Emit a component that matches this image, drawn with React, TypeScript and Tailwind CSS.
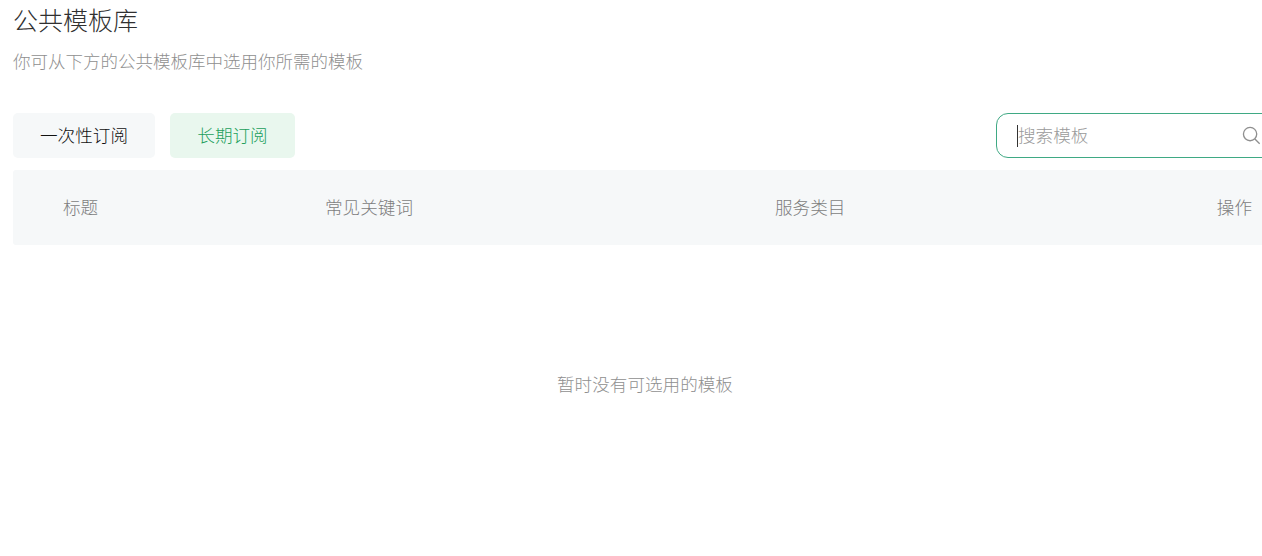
export default function App() {
  return (
    <div className="w-[1262px] h-[556px] overflow-hidden bg-white pl-[13px] font-['Noto_Sans_CJK_SC',sans-serif] font-light">
      <div className="w-[1264px]">
        <h1 className="text-[25px] leading-[34px] pt-[2px] h-[39px] text-[#303030] font-light">公共模板库</h1>
        <p className="text-[17.5px] leading-[26px] mt-[9px] text-[#8f8f8f]">你可从下方的公共模板库中选用你所需的模板</p>
        <div className="flex items-center mt-[39px] h-[45px]">
          <div className="flex gap-[15px]">
            <button className="w-[142px] h-[45px] rounded-[5px] bg-[#f6f8f9] text-[17.6px] text-[#111]">一次性订阅</button>
            <button className="w-[125px] h-[45px] rounded-[5px] bg-[#e9f7ee] text-[17.6px] text-[#229f5c]">长期订阅</button>
          </div>
          <div className="ml-auto w-[281px] shrink-0 h-[45px] rounded-[12px] border border-[#3fa984] flex items-center pl-[20px] pr-[15px]">
            <span className="w-px h-[22px] bg-[#333]" />
            <span className="text-[17.6px] text-[#9a9a9a] flex-1 whitespace-nowrap">搜索模板</span>
            <svg width="19" height="19" viewBox="0 0 20 20" fill="none" stroke="#8f8f8f" strokeWidth="1.4"><circle cx="8.5" cy="8.5" r="7" /><path d="M13.6 13.6l5 5" /></svg>
          </div>
        </div>
        <div className="mt-[12px] h-[75px] bg-[#f6f8f9] rounded-[3px] flex items-center text-[17.6px] text-[#7d7d7d] whitespace-nowrap">
          <span className="ml-[50px] w-[262px]">标题</span>
          <span className="w-[450px]">常见关键词</span>
          <span className="flex-1">服务类目</span>
          <span className="mr-[25px]">操作</span>
        </div>
        <div className="mt-[126px] text-center text-[17.6px] leading-[26px] text-[#8f8f8f]">暂时没有可选用的模板</div>
      </div>
    </div>
  );
}
